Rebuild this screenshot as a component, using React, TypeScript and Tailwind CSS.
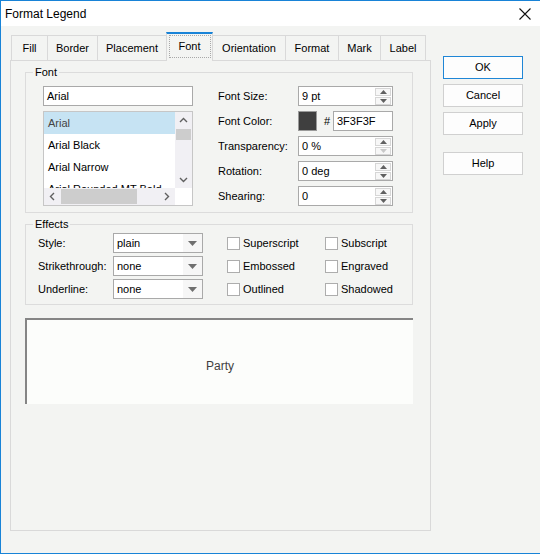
const font = { fontFamily: '"Liberation Sans", Arial, sans-serif' };

const Up = ({ c = "#606060" }: { c?: string }) => (
  <svg width="7" height="4" viewBox="0 0 7 4">
    <path d="M0 4 L3.5 0 L7 4 Z" fill={c} />
  </svg>
);

const Down = ({ c = "#606060" }: { c?: string }) => (
  <svg width="7" height="4" viewBox="0 0 7 4">
    <path d="M0 0 L3.5 4 L7 0 Z" fill={c} />
  </svg>
);

const Chevron = ({ d }: { d: string }) => (
  <svg width="9" height="9" viewBox="0 0 9 9" fill="none" stroke="#606060" strokeWidth="1.4">
    <path d={d} />
  </svg>
);

const Spinner = ({ value, disabled }: { value: string; disabled?: boolean }) => (
  <div className="flex items-center justify-between w-[95px] h-[20px] border border-[#a9a9a9] bg-white pl-[3px] pr-[1px]">
    <span>{value}</span>
    <div className="flex flex-col gap-px w-[16px] h-[17px]">
      <div className="flex flex-1 items-center justify-center bg-[#f7f7f7] border border-[#d6d6d6]">
        <Up />
      </div>
      <div className="flex flex-1 items-center justify-center bg-[#f7f7f7] border border-[#d6d6d6]">
        <Down c={disabled ? "#c8c8c8" : "#606060"} />
      </div>
    </div>
  </div>
);

const Combo = ({ value }: { value: string }) => (
  <div className="flex items-center justify-between w-[90px] h-[20px] border border-[#a9a9a9] bg-white pl-[3px]">
    <span>{value}</span>
    <div className="flex items-center justify-center w-[19px] h-full bg-[#f6f6f6]">
      <svg width="9" height="5" viewBox="0 0 9 5">
        <path d="M0 0 L4.5 5 L9 0 Z" fill="#6f6f6f" />
      </svg>
    </div>
  </div>
);

const Check = ({ label }: { label: string }) => (
  <div className="flex items-center gap-[3px] h-[20px]">
    <div className="w-[13px] h-[13px] border border-[#adadad] bg-white" />
    <span>{label}</span>
  </div>
);

const Group = ({ title, className, children }: { title: string; className: string; children: React.ReactNode }) => (
  <div className={`relative border border-[#dcdcdc] ${className}`}>
    <span className="absolute -top-[8px] left-[7px] bg-[#f3f4f2] px-[2px] leading-[14px]">{title}</span>
    {children}
  </div>
);

const tabs = ["Fill", "Border", "Placement", "Font", "Orientation", "Format", "Mark", "Label"];
const tabW = ["w-[37px]", "w-[50px]", "w-[69px]", "w-[47px]", "w-[73px]", "w-[53px]", "w-[42px]", "w-[45px]"];

export default function App() {
  return (
    <div
      className="w-[540px] h-[554px] flex flex-col border-t border-l border-b border-[#1883d7] bg-[#f3f4f2] text-[11px] text-black"
      style={font}
    >
      {/* Title bar */}
      <div className="flex items-center justify-between h-[25px] bg-white pl-[4px] pr-[9px]">
        <span className="text-[12px]">Format Legend</span>
        <svg width="12" height="12" viewBox="0 0 12 12" stroke="#111" strokeWidth="1.1">
          <path d="M0.5 0.5 L11.5 11.5 M11.5 0.5 L0.5 11.5" />
        </svg>
      </div>

      <div className="flex pl-[9px]">
        {/* Tabs + panel */}
        <div className="mt-[7px] flex flex-col">
          <div className="flex items-end h-[27px] ml-[1px]">
            {tabs.map((t, i) =>
              t === "Font" ? (
                <div
                  key={t}
                  className={`relative z-10 -ml-px -mb-px flex items-center justify-center h-[29px] border-l border-r border-[#d9d9d9] border-t-2 border-t-[#1883d7] bg-[#f3f4f2] ${tabW[i]}`}
                >
                  <span className="flex items-center justify-center w-[42px] h-[23px] border border-dotted border-[#a8a8a8] mb-[2px]">
                    {t}
                  </span>
                </div>
              ) : (
                <div
                  key={t}
                  className={`flex items-center justify-center h-[25px] border-t border-r border-[#d9d9d9] ${i === 0 ? "border-l" : ""} ${tabW[i]}`}
                >
                  {t}
                </div>
              )
            )}
          </div>

          <div className="w-[421px] h-[471px] border border-[#d9d9d9] pt-[11px] pl-[14px]">
            {/* Font group */}
            <Group title="Font" className="w-[388px] h-[141px] pt-[13px] pl-[17px]">
              <div className="flex">
                <div className="flex flex-col gap-[5px] w-[150px]">
                  <div className="flex items-center h-[20px] border border-[#a9a9a9] bg-white pl-[3px]">Arial</div>
                  <div className="grid grid-cols-[131px_17px] grid-rows-[76px_17px] h-[95px] border border-[#c6c6c6] bg-white">
                    <div className="overflow-hidden">
                      <div className="flex items-center h-[22px] pl-[4px] bg-[#c6e3f3] text-[#444]">Arial</div>
                      <div className="flex items-center h-[22px] pl-[4px]">Arial Black</div>
                      <div className="flex items-center h-[22px] pl-[4px]">Arial Narrow</div>
                      <div className="flex items-center h-[22px] pl-[4px]">Arial Rounded MT Bold</div>
                    </div>
                    <div className="flex flex-col items-center bg-[#f1f0f4]">
                      <div className="flex items-center justify-center h-[17px]">
                        <Chevron d="M1 6 L4.5 2.5 L8 6" />
                      </div>
                      <div className="w-[15px] h-[11px] bg-[#cdcdcd]" />
                      <div className="flex-1" />
                      <div className="flex items-center justify-center h-[17px]">
                        <Chevron d="M1 3 L4.5 6.5 L8 3" />
                      </div>
                    </div>
                    <div className="flex items-center bg-[#f1f0f4]">
                      <div className="flex items-center justify-center w-[17px]">
                        <Chevron d="M6 1 L2.5 4.5 L6 8" />
                      </div>
                      <div className="w-[76px] h-[15px] bg-[#cdcdcd]" />
                      <div className="flex-1" />
                      <div className="flex items-center justify-center w-[17px]">
                        <Chevron d="M3 1 L6.5 4.5 L3 8" />
                      </div>
                    </div>
                    <div className="bg-white" />
                  </div>
                </div>

                <div className="ml-[25px] grid grid-cols-[80px_95px] auto-rows-[20px] gap-y-[5px] items-center">
                  <span>Font Size:</span>
                  <Spinner value="9 pt" />
                  <span>Font Color:</span>
                  <div className="flex items-center h-[20px]">
                    <div className="w-[19px] h-[20px] border border-[#9a9a9a] bg-[#3f3f3f]" />
                    <span className="ml-[7px] w-[9px]">#</span>
                    <div className="flex items-center ml-[0px] w-[60px] h-[20px] border border-[#a9a9a9] bg-white pl-[3px]">
                      3F3F3F
                    </div>
                  </div>
                  <span>Transparency:</span>
                  <Spinner value="0 %" disabled />
                  <span>Rotation:</span>
                  <Spinner value="0 deg" />
                  <span>Shearing:</span>
                  <Spinner value="0" />
                </div>
              </div>
            </Group>

            {/* Effects group */}
            <Group title="Effects" className="mt-[11px] w-[388px] h-[81px] pt-[8px] pl-[12px]">
              <div className="flex">
                <div className="flex flex-col gap-[3px] w-[75px]">
                  <span className="flex items-center h-[20px]">Style:</span>
                  <span className="flex items-center h-[20px]">Strikethrough:</span>
                  <span className="flex items-center h-[20px]">Underline:</span>
                </div>
                <div className="flex flex-col gap-[3px]">
                  <Combo value="plain" />
                  <Combo value="none" />
                  <Combo value="none" />
                </div>
                <div className="ml-[24px] flex flex-col gap-[3px] w-[98px]">
                  <Check label="Superscript" />
                  <Check label="Embossed" />
                  <Check label="Outlined" />
                </div>
                <div className="flex flex-col gap-[3px]">
                  <Check label="Subscript" />
                  <Check label="Engraved" />
                  <Check label="Shadowed" />
                </div>
              </div>
            </Group>

            {/* Preview */}
            <div className="mt-[13px] flex items-center justify-center w-[388px] h-[86px] border-t-2 border-l-2 border-[#858585] bg-[#fcfdfb] pt-[8px] text-[12px] text-[#3f3f3f]">
              Party
            </div>
          </div>
        </div>

        {/* Buttons */}
        <div className="ml-[12px] mt-[30px] flex flex-col w-[80px]">
          <button className="h-[23px] border border-[#1f86d6] bg-[#fdfdfd]">OK</button>
          <button className="mt-[5px] h-[23px] border border-[#d0d0d0] bg-[#fdfdfd]">Cancel</button>
          <button className="mt-[5px] h-[23px] border border-[#d0d0d0] bg-[#fdfdfd]">Apply</button>
          <button className="mt-[17px] h-[23px] border border-[#d0d0d0] bg-[#fdfdfd]">Help</button>
        </div>
      </div>
    </div>
  );
}
